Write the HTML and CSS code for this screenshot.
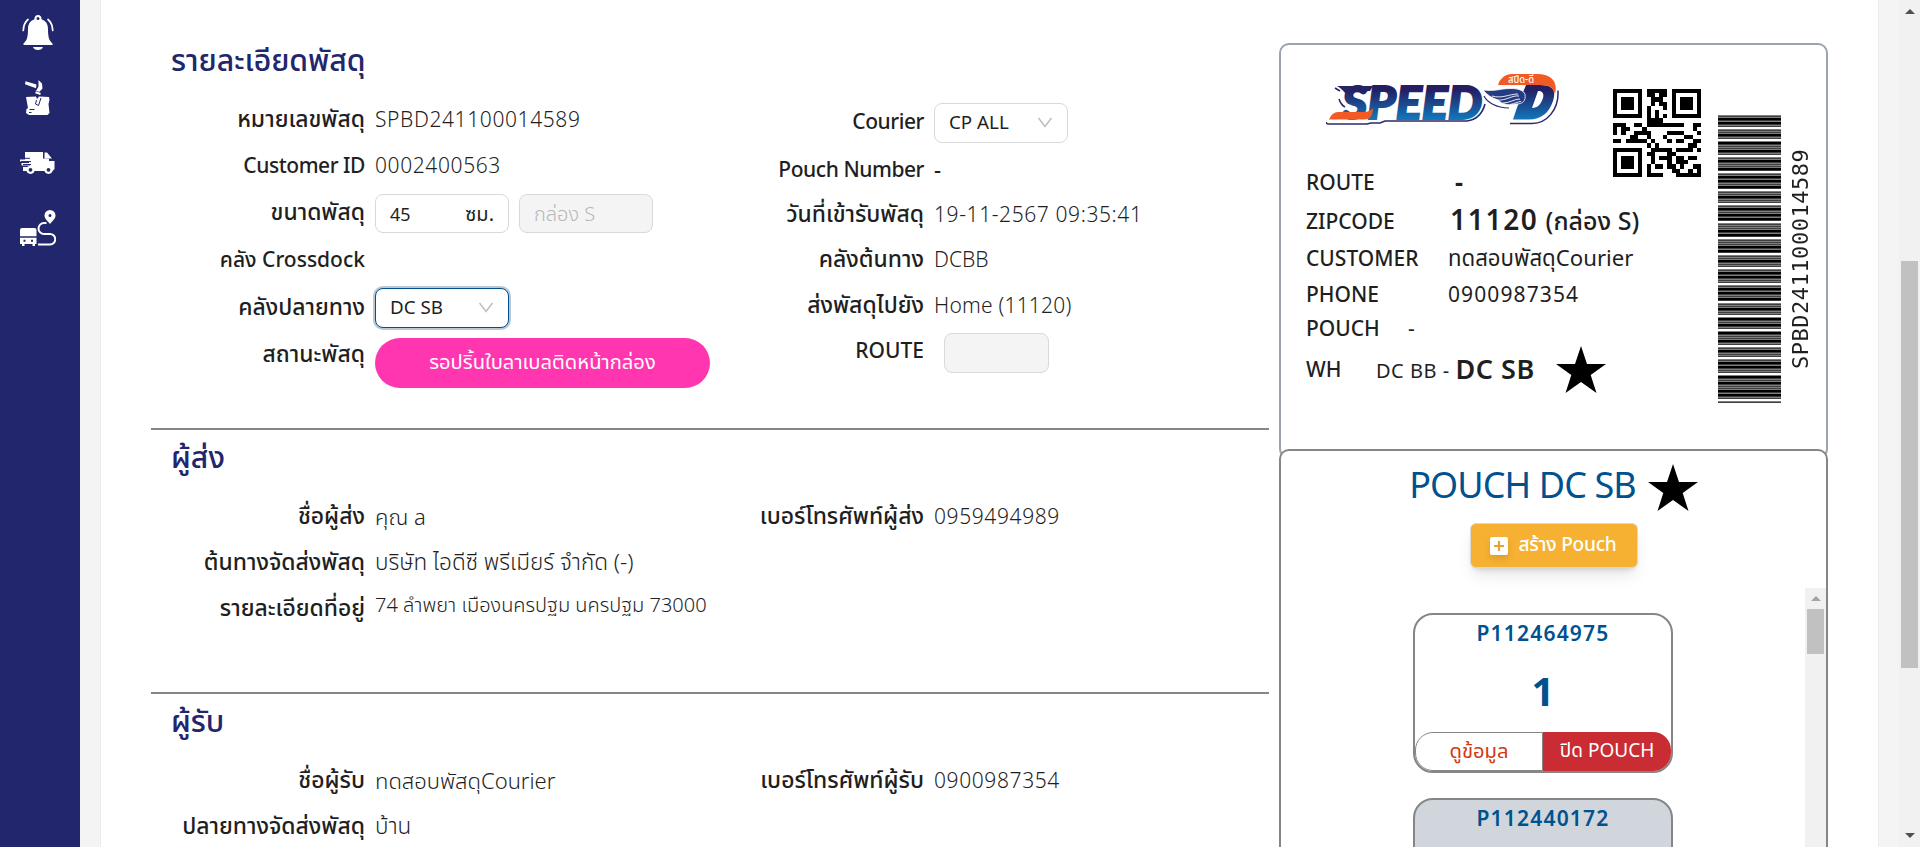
FILE: index.html
```html
<!DOCTYPE html>
<html lang="th">
<head>
<meta charset="utf-8">
<title>Speed-D</title>
<link rel="stylesheet" href="styles.css">
</head>
<body>
<div class="app">
  <nav class="sidebar">
    <svg class="nav-bell" width="32" height="36" viewBox="0 0 32 36" fill="#fff"><path fill-rule="evenodd" d="M16 0a3.6 3.6 0 0 1 3.500 4.300C24 6 26 9 26 14c0 8 1 11.500 4.500 14.500V30H1.500v-1.500C5 25.500 6 22 6 14c0-5 2-8 6.500-9.700A3.600 3.600 0 0 1 16 0zm0 1.900a1.500 1.500 0 1 0 0 3 1.500 1.500 0 0 0 0-3zM11 32h10c-1 4-9 4-10 0z"/><path d="M6 4.500C3 7 1.500 11 1.300 15.500M26 4.500c3 2.500 4.500 6.500 4.700 11" fill="none" stroke="#fff" stroke-width="1.700" stroke-linecap="round"/></svg>
    <svg class="nav-box" width="26" height="36" viewBox="0 0 26 36" fill="#fff"><path d="M.5 1.300L0 4.200l11 4 .5-3.700zM13.500 0L17 3.500l.5 5-3 3.200-3.500-.7 2.500-4.500z"/><path d="M10.500 12.300l5 1.700" stroke="#fff" stroke-width="2"/><path d="M1 17l10-.5 1 2.500 2-2.500 10 .5.5 3-1 4 1 9-2 2H4l-3-2 .5-4L3 28z"/><path d="M11.500 20l-1 4 3 1.500L16 18M4.500 29.500h5M4 32.500h2.500" fill="none" stroke="#22266c" stroke-width="1"/></svg>
    <svg class="nav-truck" width="36" height="22" viewBox="0 0 36 22"><path fill="#fff" d="M5 0h18v6.500h6V9h5.500v8l-2 2H3v-4h7v-1.500H1.500V11H9V9.500H0V7.500h5z"/><path fill="#fff" d="M24.500.5H27l5 6h-7.500z"/><path d="M2 6.300h8M1 9.600h10M3 12.500h8" stroke="#22266c" stroke-width="1"/><g fill="#22266c" stroke="#fff" stroke-width="2.200"><circle cx="10.500" cy="17.800" r="3"/><circle cx="28.500" cy="17.800" r="3"/></g></svg>
    <svg class="nav-route" width="36" height="36" viewBox="0 0 36 36"><path fill="#fff" fill-rule="evenodd" d="M30 0a5.500 5.500 0 0 1 5.500 5.500C35.500 9 32 11 30 14c-2-3-5.500-5-5.500-8.500A5.500 5.500 0 0 1 30 0zm0 4a1.500 1.500 0 1 0 0 3 1.500 1.500 0 0 0 0-3z"/><path fill="none" stroke="#fff" stroke-width="2" d="M26.500 13H24a5.500 5.500 0 0 0 0 11h6a5.200 5.200 0 0 1 0 10.500H18"/><path fill="#fff" d="M2 18h12.500q2 0 2 2v6.300H0V20q0-2 2-2zM0 27.700h16.500V34H15v2h-2.500v-2h-8v2H2v-2H0z"/><path fill="#22266c" d="M3.500 29.800h2v2h-2zM11 29.800h2v2h-2z"/></svg>
  </nav>

  <main class="page">
    <div class="details">
      <section class="section section-parcel">
        <h2>รายละเอียดพัสดุ</h2>
        <div class="columns">
          <div class="col">
            <div class="row h46"><span class="k">หมายเลขพัสดุ</span><span class="v num">SPBD241100014589</span></div>
            <div class="row h45"><span class="k en">Customer ID</span><span class="v num">0002400563</span></div>
            <div class="row h49"><span class="k">ขนาดพัสดุ</span>
              <div class="inputs"><div class="input size"><span>45</span><span class="unit">ซม.</span></div><div class="input disabled">กล่อง S</div></div></div>
            <div class="row h46"><span class="k mixed">คลัง Crossdock</span></div>
            <div class="row h49"><span class="k">คลังปลายทาง</span>
              <div class="input select focused"><span>DC SB</span><svg width="16" height="11" viewBox="0 0 16 11"><path d="M1.500 1L8 9.500 14.500 1"/></svg></div></div>
            <div class="row h46"><span class="k">สถานะพัสดุ</span><span class="pill">รอปริ้นใบลาเบลติดหน้ากล่อง</span></div>
          </div>
          <div class="col">
            <div class="row h50"><span class="k en">Courier</span>
              <div class="input select"><span>CP ALL</span><svg width="16" height="11" viewBox="0 0 16 11"><path d="M1.500 1L8 9.500 14.500 1"/></svg></div></div>
            <div class="row h46"><span class="k en">Pouch Number</span><span class="v dark">-</span></div>
            <div class="row h44"><span class="k">วันที่เข้ารับพัสดุ</span><span class="v num">19-11-2567 09:35:41</span></div>
            <div class="row h46"><span class="k">คลังต้นทาง</span><span class="v en-v">DCBB</span></div>
            <div class="row h45"><span class="k">ส่งพัสดุไปยัง</span><span class="v home">Home (11120)</span></div>
            <div class="row h45"><span class="k caps">ROUTE</span><div class="input disabled route"></div></div>
          </div>
        </div>
      </section>
      <section class="section section-sender">
        <h2>ผู้ส่ง</h2>
        <div class="columns">
          <div class="col">
            <div class="row h46"><span class="k">ชื่อผู้ส่ง</span><span class="v">คุณ a</span></div>
            <div class="row h46"><span class="k">ต้นทางจัดส่งพัสดุ</span><span class="v company">บริษัท ไอดีซี พรีเมียร์ จำกัด (-)</span></div>
            <div class="row h45"><span class="k">รายละเอียดที่อยู่</span><span class="v address">74 ลำพยา เมืองนครปฐม นครปฐม 73000</span></div>
          </div>
          <div class="col">
            <div class="row h46"><span class="k">เบอร์โทรศัพท์ผู้ส่ง</span><span class="v num">0959494989</span></div>
          </div>
        </div>
      </section>
      <section class="section section-receiver">
        <h2>ผู้รับ</h2>
        <div class="columns">
          <div class="col">
            <div class="row h46"><span class="k">ชื่อผู้รับ</span><span class="v">ทดสอบพัสดุCourier</span></div>
            <div class="row h45"><span class="k">ปลายทางจัดส่งพัสดุ</span><span class="v company">บ้าน</span></div>
          </div>
          <div class="col">
            <div class="row h46"><span class="k">เบอร์โทรศัพท์ผู้รับ</span><span class="v num">0900987354</span></div>
          </div>
        </div>
      </section>
    </div>

    <aside class="side">
      <div class="label">
        <div class="label-main">
          <div class="label-head">
            <svg class="logo" width="236" height="56" viewBox="0 0 236 56">
              <defs>
                <linearGradient id="blue" gradientUnits="userSpaceOnUse" x1="0" y1="18" x2="0" y2="48"><stop offset="0" stop-color="#241f63"/><stop offset="1" stop-color="#1279bd"/></linearGradient>
              </defs>
              <path d="M0 50q0 2 3 2h38l4-1h9l5-2h82q14-2 18-17" fill="none" stroke="#2a2a6c" stroke-width="1.600"/>
              <path d="M9 16l5 3M13 27q2 6 6 8" fill="none" stroke="#2a2a6c" stroke-width="1.600"/>
              <g class="logo-word">
                <text class="logo-face" x="16" y="47" textLength="140" lengthAdjust="spacingAndGlyphs">SPEED</text>
              </g>
              <path d="M3 47.500q3-7.500 9-7.500h27q6-1 8-4 0 11.500-9 11.500z" fill="#f15a24"/>
              <path d="M11 14h36l-3 5H25q-6 0-5 3-5-6-9-8z" fill="#262361"/>
              <path d="M184 51.500h22c15 0 27-14 26-33" fill="none" stroke="#2a2a6c" stroke-width="1.500"/>
              <path fill-rule="evenodd" d="M200 13h14c14 0 16 6 13 16-4 12-12 18.500-24 18.500h-16l4-12 4-10z M212 19l-6 17c6 0 9-4 11-10 1-4 0-7-5-7z" fill="url(#blue)"/>
              <path d="M172 13q3-10 13-11h26c15 0 21 8 18 20-2-7-6-9-14-9z" fill="#f15a24"/>
              <path d="M157 18c9 1 14 0 20-1 9-1 19-1 22 5 1 7-2 10-9 10-8 2-14 0-18-4-6-2-11-5-15-10z" fill="#243c83" stroke="#fff" stroke-width=".8"/>
              <path d="M166 24c10 3 17-2 26-2M171 28c9 1 15-5 22-4M177 31c7 0 11-4 17-4M184 32.500c5-1 8-3 11-3" fill="none" stroke="#fff" stroke-width=".9"/>
              <path d="M158 24c3 6 12 12 25 12" fill="none" stroke="#2a2a6c" stroke-width="1.200"/>
              <text class="logo-thai" x="182" y="11" textLength="26" lengthAdjust="spacingAndGlyphs">สปีด-ดี</text>
            </svg>
            <svg class="qr" id="qr" width="88" height="88" viewBox="0 0 21 21" shape-rendering="crispEdges"></svg>
          </div>
          <div class="line l-route"><span class="lk">ROUTE</span><b class="dash">-</b></div>
          <div class="line l-zip"><span class="lk">ZIPCODE</span><b class="zip">11120</b><span class="box">(กล่อง S)</span></div>
          <div class="line l-customer"><span class="lk">CUSTOMER</span><span class="name">ทดสอบพัสดุCourier</span></div>
          <div class="line l-phone"><span class="lk">PHONE</span><span class="tel">0900987354</span></div>
          <div class="line l-pouch"><span class="lk">POUCH</span><span>-</span></div>
          <div class="line l-wh"><span class="lk">WH</span><span class="from">DC BB -</span><b class="to">DC SB</b>
            <svg class="star" width="50" height="48" viewBox="0 0 50 48"><path d="M25 0l6 18h19L34.700 29l5.800 18L25 36 9.500 47l5.800-18L0 18h19z"/></svg></div>
        </div>
        <svg class="barcode" id="barcode" width="63" height="288" viewBox="0 0 63 288"></svg>
        <span class="barcode-text">SPBD241100014589</span>
      </div>
      <div class="pouch">
        <div class="pouch-title"><span>POUCH DC SB</span>
          <svg class="star" width="50" height="48" viewBox="0 0 50 48"><path d="M25 0l6 18h19L34.700 29l5.800 18L25 36 9.500 47l5.800-18L0 18h19z"/></svg></div>
        <button class="create"><svg width="18" height="18" viewBox="0 0 18 18"><rect width="18" height="18" rx="2" fill="#fff"/><path d="M9 4v10M4 9h10" stroke="#e5a32f" stroke-width="2.200"/></svg><span>สร้าง Pouch</span></button>
        <div class="list">
          <div class="cards">
            <div class="card">
              <div class="code">P112464975</div>
              <div class="count">1</div>
              <div class="actions"><span class="view">ดูข้อมูล</span><span class="close">ปิด POUCH</span></div>
            </div>
            <div class="card grey"><div class="code">P112440172</div></div>
          </div>
          <div class="bar"><i class="up"></i><i class="thumb"></i></div>
        </div>
      </div>
    </aside>
  </main>
  <div class="bar window-bar"><i class="up"></i><i class="thumb"></i><i class="down"></i></div>
</div>
<script src="codes.js"></script>
</body>
</html>
```

FILE: styles.css
```css
* { box-sizing: border-box; }
body {
  margin: 0;
  background: #f4f4f4;
  color: #1f1f1f;
  font-family: "Noto Sans", "Noto Sans Thai", sans-serif;
  font-size: 21px;
  line-height: 30px;
  overflow: hidden;
}
h2 { margin: 0; font-weight: 500; }
svg { display: block; flex: none; }
.app { display: flex; height: 847px; overflow: hidden; }

.sidebar {
  flex: none;
  width: 80px;
  background: #22266c;
  display: flex;
  flex-direction: column;
  padding: 15px 0 0 20px;
}
.nav-bell { margin-left: 2px; }
.nav-box { margin: 29px 0 0 5px; }
.nav-truck { margin-top: 36px; }
.nav-route { margin-top: 36px; }

.page {
  flex: none;
  width: 1779px;
  margin-left: 20px;
  padding-left: 50px;
  background: #fff;
  border: solid #ececec;
  border-width: 0 1px;
  display: flex;
  gap: 10px;
}
.details { width: 1118px; flex: none; }
.section { border-bottom: 2px solid #868686; }
.section h2 {
  padding-left: 20px;
  font-size: 30.200px;
  line-height: 40px;
  color: #22266c;
  white-space: nowrap;
}
.section-parcel { height: 430px; padding-top: 40px; }
.section-parcel .columns { margin-top: 16px; }
.section-sender { height: 264px; padding-top: 7px; }
.section-sender .columns { margin-top: 16px; }
.section-receiver { padding-top: 7px; border: 0; }
.section-receiver .columns { margin-top: 16px; }

.columns { display: grid; grid-template-columns: 559px 559px; }
.row { display: flex; align-items: center; }
.h44 { height: 44px; }
.h45 { height: 45px; }
.h46 { height: 46px; }
.h49 { height: 49px; }
.h50 { height: 50px; }
.k {
  flex: none;
  width: 214px;
  margin-right: 10px;
  text-align: right;
  font-size: 22.900px;
  font-weight: 500;
  line-height: 28px;
  white-space: nowrap;
}
.en { font-size: 21px; letter-spacing: -0.450px; }
.caps, .mixed { font-size: 21px; }
.v { font-size: 22px; font-weight: 350; white-space: nowrap; }
.num { font-size: 21px; letter-spacing: 0.600px; }
.en-v { font-size: 21px; }
.home { font-size: 21px; letter-spacing: 0.200px; }
.dark { font-weight: 500; }
.company { font-size: 22.500px; }
.address { font-size: 20px; margin-top: -5px; }

.inputs { display: flex; gap: 10px; margin-top: 4px; }
.input {
  display: flex;
  align-items: center;
  justify-content: space-between;
  width: 134px;
  height: 39px;
  padding: 0 14px;
  border: 1px solid #d9d9d9;
  border-radius: 8px;
  background: #fff;
  font-size: 18.800px;
  white-space: nowrap;
}
.size { font-size: 18px; }
.unit { font-size: 20px; }
.select { height: 40px; padding-bottom: 3px; margin-top: 4px; }
.select svg { fill: none; stroke: #bfbfbf; stroke-width: 1.500; margin-top: 2px; }
.focused { border-color: #004f8f; box-shadow: 0 0 0 2px #b8c9d2; margin-top: 3px; }
.disabled { background: #f4f4f4; color: #b8b8b8; font-size: 20px; font-weight: 300; }
.route { width: 105px; height: 40px; margin: 7px 0 0 10px; }
.pill {
  align-self: flex-start;
  flex: none;
  width: 335px;
  height: 50px;
  margin-top: 7px;
  border-radius: 25px;
  background: #ff36b0;
  color: #fff;
  font-size: 20.200px;
  line-height: 46px;
  text-align: center;
}

.side { width: 549px; flex: none; padding-top: 43px; }
.label {
  display: flex;
  height: 416px;
  border: 2px solid #9ca3af;
  border-radius: 10px;
}
.label-main { width: 437px; flex: none; padding-left: 25px; }
.label-head { display: flex; height: 117px; }
.logo { margin: 27px 0 0 20px; }
.logo-word { font: italic 900 46px "Lato", "Open Sans", sans-serif; }
.logo-face { fill: url(#blue); stroke: url(#blue); stroke-width: 2; }
.logo-thai { font: 500 10px "Noto Sans", "Noto Sans Thai", sans-serif; fill: #fff; }
.qr { margin: 44px 0 0 51px; }
.line { display: flex; align-items: center; white-space: nowrap; }
.lk { flex: none; width: 142px; font-weight: 500; }
.l-route { height: 40px; }
.l-zip { height: 38px; }
.l-customer { height: 36px; }
.l-phone { height: 35px; }
.l-pouch { height: 34px; }
.l-wh { height: 49px; }
.l-wh .lk { margin-top: -2px; }
.dash { margin: -3px 0 0 7px; font-size: 25px; }
.zip { margin: -5px 0 0 2px; font-size: 28px; font-weight: 600; line-height: 38px; letter-spacing: 1.700px; }
.box { margin: -2px 0 0 7px; font-size: 25px; font-weight: 500; }
.name { font-size: 22.200px; }
.tel { letter-spacing: 1.100px; }
.l-pouch .lk { width: 102px; }
.l-wh .lk { width: 70px; }
.from { font-size: 20px; margin-top: 2px; letter-spacing: 0.500px; }
.to { margin: -2px 0 0 6px; font-size: 27px; font-weight: 600; letter-spacing: 0.500px; }
.l-wh .star { margin-left: 21px; }
.barcode { margin-top: 70px; }
.barcode-text {
  margin: 103px 0 0 10px;
  height: 221px;
  width: 20px;
  writing-mode: vertical-rl;
  transform: rotate(180deg);
  font-family: "DejaVu Sans Mono", monospace;
  font-size: 22px;
  line-height: 20px;
  letter-spacing: 0.520px;
  white-space: nowrap;
}

.pouch {
  margin-top: -10px;
  height: 410px;
  border: 2px solid #868686;
  border-bottom: 0;
  border-radius: 10px 10px 0 0;
  background: #fff;
  display: flex;
  flex-direction: column;
  align-items: center;
}
.pouch-title {
  display: flex;
  gap: 12px;
  margin-top: 13px;
  color: #00528f;
  font-size: 36px;
  line-height: 42px;
  letter-spacing: -0.900px;
  white-space: nowrap;
}
.create {
  display: flex;
  align-items: center;
  justify-content: center;
  gap: 10px;
  width: 168px;
  height: 45px;
  margin-top: 11px;
  padding: 0;
  border: 1px solid #d9d9d9;
  border-radius: 6px;
  background: #f6b132;
  color: #fff;
  font: 500 19px "Noto Sans", "Noto Sans Thai", sans-serif;
  box-shadow: 0 10px 15px -3px rgba(0, 0, 0, .1), 0 4px 6px -4px rgba(0, 0, 0, .2);
}
.create svg { filter: drop-shadow(0 4px 3px rgba(0, 0, 0, .1)); }
.create span { letter-spacing: -0.200px; }
.list { align-self: stretch; display: flex; margin-top: 20px; height: 259px; overflow: hidden; }
.cards { flex: 1; padding: 25px 0 0 132px; }
.card {
  width: 260px;
  height: 160px;
  margin-bottom: 25px;
  border: 2px solid #868686;
  border-radius: 20px;
  display: flex;
  flex-direction: column;
  align-items: center;
  color: #00528f;
}
.grey { background: #d1d5dc; }
.code { margin-top: 3px; font-weight: 600; letter-spacing: 1.200px; }
.count { margin-top: 13px; font-size: 40px; font-weight: 700; line-height: 60px; }
.actions { display: flex; width: 256px; height: 39px; margin-top: auto; font-size: 19px; line-height: 36px; text-align: center; }
.view { flex: none; width: 128px; border: 1px solid #868686; border-radius: 18px 0 0 18px; color: #d4380d; font-size: 20.200px; line-height: 34px; }
.close { flex: 1; border-radius: 0 18px 18px 0; background: #c92d33; color: #fff; }

.bar { flex: none; width: 21px; background: #f1f1f1; display: flex; flex-direction: column; align-items: center; }
.bar .up, .bar .down { border: 5px solid transparent; width: 0; height: 0; }
.bar .up { margin-top: 3px; border-bottom-color: #a3a3a3; }
.bar .thumb { width: 17px; height: 45px; margin-top: 8px; background: #c1c1c1; }
.window-bar { margin-left: 20px; }
.window-bar .up { margin-top: 4px; border-bottom-color: #505050; }
.window-bar .thumb { margin-top: 247px; height: 407px; }
.window-bar .down { margin-top: 165px; border-top-color: #505050; }
```

FILE: codes.js
```js
const CODE = "SPBD241100014589";

// Code 39 bars, drawn bottom to top; module width is 1px, wide elements are 3.
const C39 = {
  "0": "nnnwwnwnn", "1": "wnnwnnnnw", "2": "nnwwnnnnw", "3": "wnwwnnnnn", "4": "nnnwwnnnw",
  "5": "wnnwwnnnn", "6": "nnwwwnnnn", "7": "nnnwnnwnw", "8": "wnnwnnwnn", "9": "nnwwnnwnn",
  "B": "nnwnnwnnw", "D": "nnnnwwnnw", "P": "nnwnwnnwn", "S": "nnwnnnwwn", "*": "nwnnwnwnn"
};
function barcode() {
  let y = 287.7, path = "";
  for (const ch of "*" + CODE + "*") {
    [...C39[ch]].forEach((e, i) => {
      const w = e === "w" ? 3 : 1;
      y -= w;
      if (i % 2 === 0) path += `M0 ${(y - 0.1).toFixed(2)}h63v${w + 0.2}h-63z`;
    });
    y -= 1;
  }
  document.getElementById("barcode").innerHTML = `<path d="${path}"/>`;
}

// QR version 1, level L, alphanumeric mode.
function qr(mask, format) {
  const N = 21, set = "0123456789ABCDEFGHIJKLMNOPQRSTUVWXYZ $%*+-./:";
  const bin = (v, n) => v.toString(2).padStart(n, "0");
  let bits = "0010" + bin(CODE.length, 9);
  for (let i = 0; i < CODE.length; i += 2) bits += bin(set.indexOf(CODE[i]) * 45 + set.indexOf(CODE[i + 1]), 11);
  bits += "0000";
  while (bits.length % 8) bits += "0";
  const data = bits.match(/.{8}/g).map(b => parseInt(b, 2));
  for (let p = 0xec; data.length < 19; p ^= 0xec ^ 0x11) data.push(p);

  const mul = (a, b) => {
    let z = 0;
    for (let i = 7; i >= 0; i--) { z = (z << 1) ^ ((z >>> 7) * 0x11d); z ^= ((b >>> i) & 1) * a; }
    return z;
  };
  const gen = [0, 0, 0, 0, 0, 0, 1];
  let root = 1;
  for (let i = 0; i < 7; i++) {
    for (let j = 0; j < 7; j++) { gen[j] = mul(gen[j], root); if (j + 1 < 7) gen[j] ^= gen[j + 1]; }
    root = mul(root, 2);
  }
  const rem = [0, 0, 0, 0, 0, 0, 0];
  for (const b of data) {
    const f = b ^ rem.shift();
    rem.push(0);
    gen.forEach((g, i) => { rem[i] ^= mul(g, f); });
  }
  const stream = data.concat(rem).map(b => bin(b, 8)).join("");

  const m = Array.from({ length: N }, () => Array(N).fill(null));
  for (const [cx, cy] of [[3, 3], [17, 3], [3, 17]])
    for (let dy = -4; dy <= 4; dy++) for (let dx = -4; dx <= 4; dx++) {
      const x = cx + dx, y = cy + dy, d = Math.max(Math.abs(dx), Math.abs(dy));
      if (x >= 0 && x < N && y >= 0 && y < N) m[y][x] = d !== 2 && d !== 4;
    }
  for (let i = 8; i < 13; i++) m[6][i] = m[i][6] = i % 2 === 0;
  const f = i => format[14 - i] === "1";
  for (let i = 0; i <= 5; i++) m[i][8] = f(i);
  m[7][8] = f(6); m[8][8] = f(7); m[8][7] = f(8);
  for (let i = 9; i < 15; i++) m[8][14 - i] = f(i);
  for (let i = 0; i < 8; i++) m[8][N - 1 - i] = f(i);
  for (let i = 8; i < 15; i++) m[N - 15 + i][8] = f(i);
  m[13][8] = true;

  let k = 0;
  for (let right = N - 1; right >= 1; right -= 2) {
    if (right === 6) right = 5;
    for (let v = 0; v < N; v++) for (let j = 0; j < 2; j++) {
      const x = right - j, y = ((right + 1) & 2) === 0 ? N - 1 - v : v;
      if (m[y][x] === null) m[y][x] = (stream[k++] === "1") !== mask(x, y);
    }
  }
  let path = "";
  m.forEach((r, y) => r.forEach((on, x) => { if (on) path += `M${x} ${y}h1v1h-1z`; }));
  document.getElementById("qr").innerHTML = `<path d="${path}"/>`;
}

barcode();
qr((x, y) => y % 2 === 0, "111001011110011");
```
